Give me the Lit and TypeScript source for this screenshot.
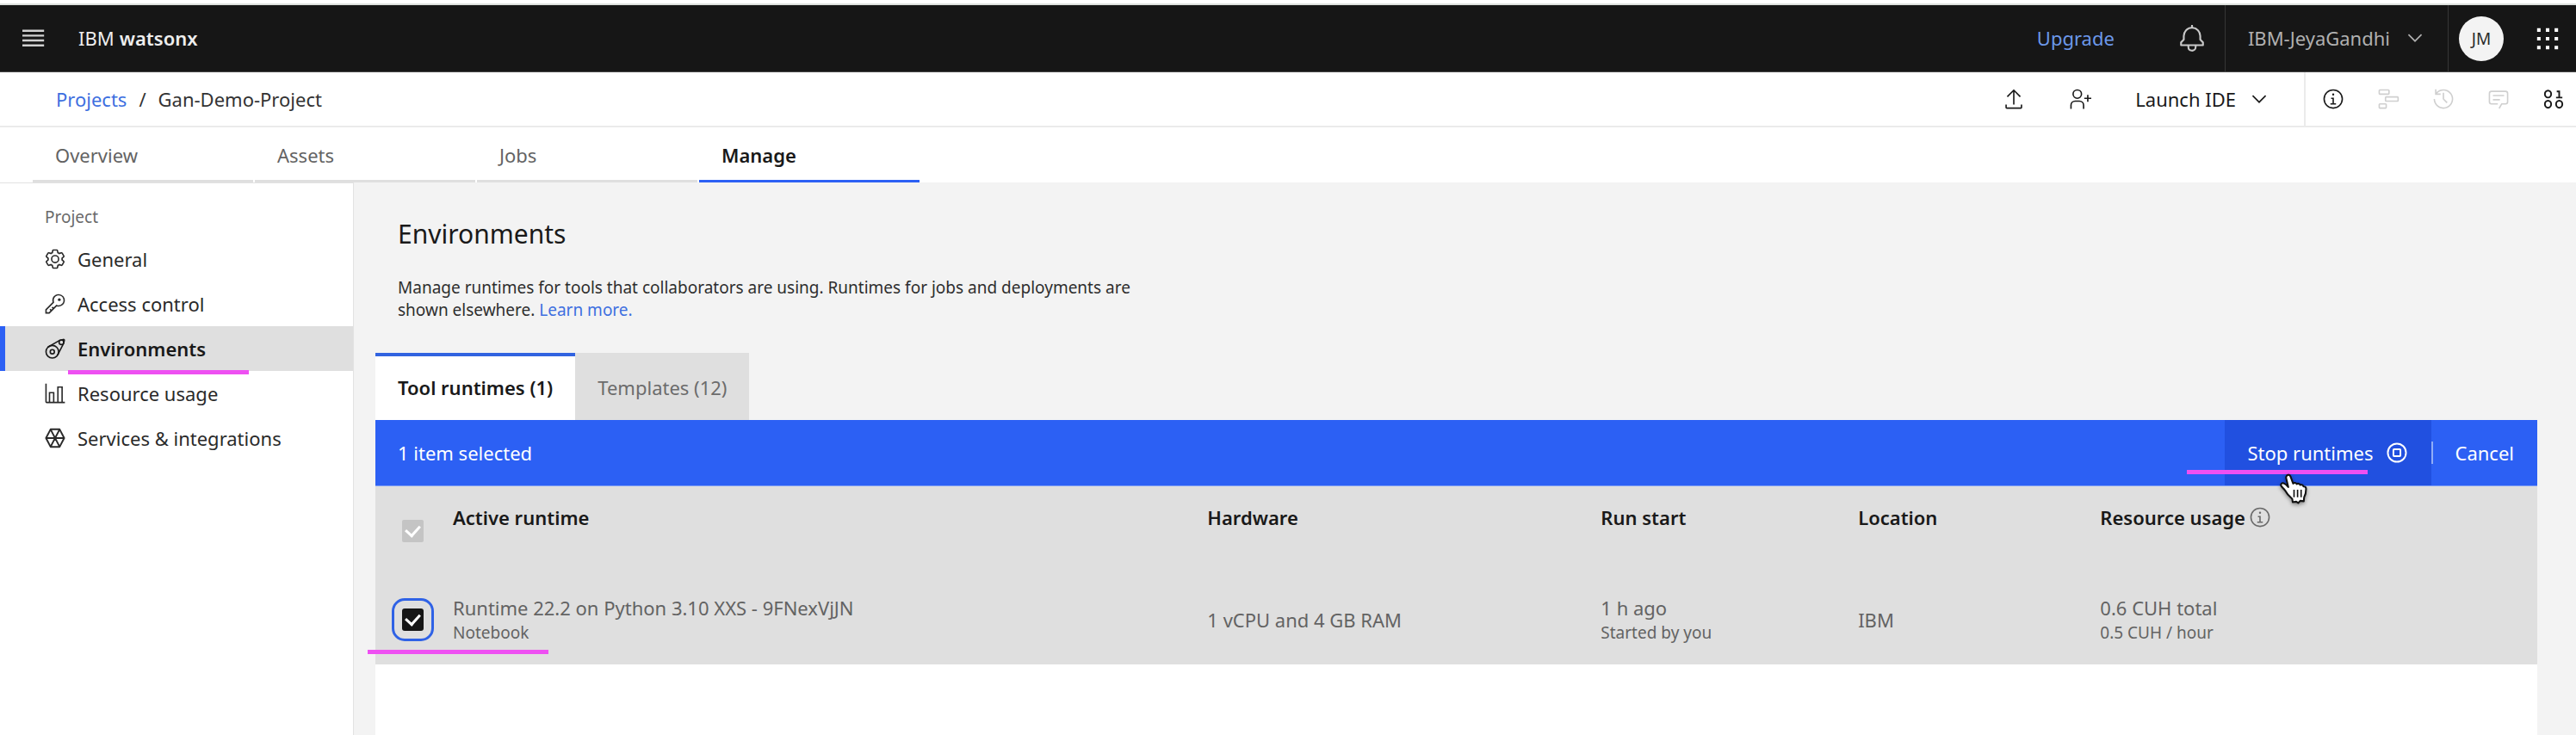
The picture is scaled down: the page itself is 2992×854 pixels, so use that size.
import { LitElement, html, svg, css, nothing } from "lit";
import { customElement, property } from "lit/decorators.js";

const ICONS: Record<string, unknown> = {
  menu: svg`<path d="M0 3h31v3H0zM0 10h31v3H0zM0 17h31v3H0zM0 24h31v3H0z"/>`,
  bell: svg`<path d="M28.7071,19.293,26,16.5859V13a10.0136,10.0136,0,0,0-9-9.9492V1H15V3.0508A10.0136,10.0136,0,0,0,6,13v3.5859L3.2929,19.293A1,1,0,0,0,3,20v3a1,1,0,0,0,1,1h7v.7768a5.152,5.152,0,0,0,4.5,5.1987A5.0057,5.0057,0,0,0,21,25V24h7a1,1,0,0,0,1-1V20A1,1,0,0,0,28.7071,19.293ZM19,25a3,3,0,0,1-6,0V24h6Zm8-3H5V20.4141L7.707,17.707A1,1,0,0,0,8,17V13a8,8,0,0,1,16,0v4a1,1,0,0,0,.293.707L27,20.4141Z"/>`,
  chevron: svg`<path d="M16 22 6 12 7.4 10.6 16 19.2 24.6 10.6 26 12z"/>`,
  apps: svg`<path d="M1 1h5v5H1zM13.5 1h5v5h-5zM26 1h5v5h-5zM1 13.5h5v5H1zM13.5 13.5h5v5h-5zM26 13.5h5v5h-5zM1 26h5v5H1zM13.5 26h5v5h-5zM26 26h5v5h-5z"/>`,
  export: svg`<path d="M26,24v4H6V24H4v4a2,2,0,0,0,2,2H26a2,2,0,0,0,2-2V24ZM6,12l1.41,1.41L15,5.83V24h2V5.83l7.59,7.58L26,12,16,2Z"/>`,
  invite: svg`<path d="M32,14H28V10H26v4H22v2h4v4h2V16h4ZM12,4a5,5,0,1,1-5,5,5,5,0,0,1,5-5m0-2a7,7,0,1,0,7,7A7,7,0,0,0,12,2ZM22,30H20V25a5,5,0,0,0-5-5H9a5,5,0,0,0-5,5v5H2V25a7,7,0,0,1,7-7h6a7,7,0,0,1,7,7Z"/>`,
  info: svg`<path d="M17,22V14H13v2h2v6H12v2h8V22ZM16,8a1.5,1.5,0,1,0,1.5,1.5A1.5,1.5,0,0,0,16,8Z"/><path d="M16,30A14,14,0,1,1,30,16,14,14,0,0,1,16,30ZM16,4A12,12,0,1,0,28,16,12,12,0,0,0,16,4Z"/>`,
  flow: svg`<g fill="none" stroke="currentColor" stroke-width="2"><rect x="3" y="3" width="14" height="6" rx="1"/><rect x="12" y="13" width="18" height="6" rx="1"/><rect x="3" y="23" width="10" height="6" rx="1"/></g>`,
  history: svg`<path d="M20.59,22,15,16.41V7h2v8.58l5,5.01L20.59,22Z"/><path d="M16,2A13.94,13.94,0,0,0,6,6.23V2H4v8h8V8H7.08A12,12,0,1,1,4,16H2A14,14,0,1,0,16,2Z"/>`,
  chat: svg`<path d="M17.74,30,16,29l4-7h6a2,2,0,0,0,2-2V8a2,2,0,0,0-2-2H6A2,2,0,0,0,4,8V20a2,2,0,0,0,2,2h9v2H6a4,4,0,0,1-4-4V8A4,4,0,0,1,6,4H26a4,4,0,0,1,4,4V20a4,4,0,0,1-4,4H21.16Z"/><path d="M8 10H24V12H8zM8 16H18V18H8z"/>`,
  data: svg`<g fill="none" stroke="currentColor" stroke-width="2.4"><ellipse cx="8" cy="9" rx="4.5" ry="5"/><ellipse cx="8" cy="23.5" rx="4.5" ry="5"/><ellipse cx="24" cy="23.5" rx="4.5" ry="5"/><path d="M20.5 5.2H24V14M19.5 14h9"/></g>`,
  settings: svg`<path d="M27,16.76c0-.25,0-.5,0-.76s0-.51,0-.77l1.92-1.68A2,2,0,0,0,29.3,11L26.94,7a2,2,0,0,0-1.73-1,2,2,0,0,0-.64.1l-2.43.82a11.35,11.35,0,0,0-1.31-.75l-.51-2.52a2,2,0,0,0-2-1.61H13.64a2,2,0,0,0-2,1.61l-.51,2.52a11.48,11.48,0,0,0-1.32.75L7.43,6.06A2,2,0,0,0,6.79,6,2,2,0,0,0,5.06,7L2.7,11a2,2,0,0,0,.41,2.51L5,15.24c0,.25,0,.5,0,.76s0,.51,0,.77L3.11,18.45A2,2,0,0,0,2.7,21L5.06,25a2,2,0,0,0,1.73,1,2,2,0,0,0,.64-.1l2.43-.82a11.35,11.35,0,0,0,1.31.75l.51,2.52a2,2,0,0,0,2,1.61h4.72a2,2,0,0,0,2-1.61l.51-2.52a11.48,11.48,0,0,0,1.32-.75l2.42.82a2,2,0,0,0,.64.1,2,2,0,0,0,1.73-1L29.3,21a2,2,0,0,0-.41-2.51ZM25.21,24l-3.43-1.16a8.86,8.86,0,0,1-2.71,1.57L18.36,28H13.64l-.71-3.55a9.36,9.36,0,0,1-2.7-1.57L6.79,24,4.43,20l2.72-2.4a8.9,8.9,0,0,1,0-3.13L4.43,12,6.79,8l3.43,1.16a8.86,8.86,0,0,1,2.71-1.57L13.64,4h4.72l.71,3.55a9.36,9.36,0,0,1,2.7,1.57L25.21,8,27.57,12l-2.72,2.4a8.9,8.9,0,0,1,0,3.13L27.57,20Z"/><path d="M16,22a6,6,0,1,1,6-6A5.94,5.94,0,0,1,16,22Zm0-10a3.91,3.91,0,0,0-4,4,3.91,3.91,0,0,0,4,4,3.91,3.91,0,0,0,4-4A3.91,3.91,0,0,0,16,12Z"/>`,
  key: svg`<path d="M21,2a8.9977,8.9977,0,0,0-8.6119,11.6118L2,24v6H8L18.3881,19.6118A9,9,0,1,0,21,2Zm0,16a7.0125,7.0125,0,0,1-2.0322-.3022L17.821,17.35l-.8472.8472-3.1811,3.1812L12.4141,20,11,21.4141l1.3787,1.3786-1.5859,1.586L9.4141,23,8,24.4141l1.3787,1.3786L7.1716,28H4V24.8284l9.8023-9.8023.8472-.8474-.3473-1.1467A7,7,0,1,1,21,18Z"/><circle cx="22" cy="10" r="2"/>`,
  environment: svg`<g fill="none" stroke="currentColor" stroke-width="2"><circle cx="12" cy="20.5" r="9"/><circle cx="12" cy="20.5" r="3"/><circle cx="25" cy="7" r="3.3"/><path d="M5.5 14.2 22.5 4.2 27.5 3Q29.5 2.7 29.2 4.5L28 9 19.5 25.5"/></g>`,
  chart: svg`<path d="M27,28V6H19V28H15V14H7V28H4V2H2V28a2,2,0,0,0,2,2H30V28ZM13,28H9V16h4Zm12,0H21V8h4Z"/>`,
  services: svg`<g fill="none" stroke="currentColor" stroke-width="2.4" stroke-linejoin="round"><path d="M3 16 9.5 3.5h13L29 16l-6.500 12.5h-13zM9.500 3.500l13 25M22.500 3.500l-13 25M3 16h26"/></g>`,
  stop: svg`<g fill="none" stroke="currentColor" stroke-width="2.4"><circle cx="16" cy="16" r="13"/><rect x="11" y="11" width="10" height="10" rx="1"/></g>`,
};

@customElement("ui-icon")
class UiIcon extends LitElement {
  @property() name = "";
  static styles = css`
    :host { display: inline-flex; flex: none; width: 26px; height: 26px; }
    svg { width: 100%; height: 100%; fill: currentColor; }
  `;
  render() {
    return html`<svg viewBox="0 0 32 32" aria-hidden="true">${ICONS[this.name]}</svg>`;
  }
}

const TABS = ["Overview", "Assets", "Jobs", "Manage"];
const NAV = [
  { icon: "settings", label: "General" },
  { icon: "key", label: "Access control" },
  { icon: "environment", label: "Environments" },
  { icon: "chart", label: "Resource usage" },
  { icon: "services", label: "Services & integrations" },
];
const TOOLS = [
  { icon: "info", label: "Information", off: false },
  { icon: "flow", label: "Lineage", off: true },
  { icon: "history", label: "History", off: true },
  { icon: "chat", label: "Comments", off: true },
  { icon: "data", label: "Data", off: false },
];
const RUNTIMES = [
  {
    name: "Runtime 22.2 on Python 3.10 XXS - 9FNexVjJN", kind: "Notebook",
    hardware: "1 vCPU and 4 GB RAM", start: "1 h ago", by: "Started by you",
    location: "IBM", total: "0.6 CUH total", rate: "0.5 CUH / hour",
  },
];

@customElement("app-root")
class AppRoot extends LitElement {
  static styles = css`
    :host {
      --blue: #2c60f4;
      --line: #e2e2e2;
      --layer: #dfdfdf;
      --muted: #636363;
      display: flex; flex-direction: column; min-height: 100vh;
      background: #fff; color: #191919;
      font: 400 22px/30px "Noto Sans", "Open Sans", sans-serif;
    }
    * { box-sizing: border-box; }
    button { border: 0; margin: 0; padding: 0; background: none; color: inherit; font: inherit; display: flex; align-items: center; justify-content: center; }
    a { color: inherit; text-decoration: none; }
    h1, p, ul { margin: 0; padding: 0; }

    .top { display: flex; margin-top: 4px; border-top: 2px solid #dde1dd; height: 80px; background: #161616; color: #e2e2e2; border-bottom: 1px solid #474747; }
    .menu { width: 77px; color: #d0d0d0; }
    .brand { display: flex; align-items: center; gap: 6px; padding: 0 0 2px 14px; color: #eee; }
    .brand strong { font-weight: 600; }
    .right { display: flex; align-items: stretch; margin-left: auto; }
    .upgrade { display: flex; align-items: center; color: #6c98ea; padding: 0 52px 2px 0; }
    .bell { width: 76px; color: #c8c8c8; }
    .bell ui-icon { width: 34px; height: 34px; }
    .account { gap: 16px; padding: 0 25px 2px 26px; color: #b0b0b0; border: solid #363636; border-width: 0 1px; }
    .user { padding: 0 18px 0 12px; }
    .avatar { display: flex; align-items: center; justify-content: center; width: 52px; height: 52px; border-radius: 50%; background: #f3f3f3; color: #2a2a2a; font-size: 19px; }
    .apps { width: 66px; color: #fff; }

    .crumbs { display: flex; align-items: stretch; height: 64px; border-bottom: 2px solid #ebebeb; }
    .path { display: flex; align-items: center; gap: 14px; padding-left: 65px; color: #333; }
    .path a, .about a { color: #3d6fe0; }
    .action { width: 77px; }
    .launch { gap: 14px; padding: 0 39px 0 26px; }
    .tools { display: flex; border-left: 2px solid #ebebeb; }
    .tool { width: 64px; }
    .tool:disabled { color: #cfcfcf; }
    .tool:last-child { width: 58px; padding-left: 6px; }

    .tabs { display: flex; gap: 2px; height: 64px; padding-left: 38px; }
    .tab { width: 256px; padding: 3px 0 0 26px; border-bottom: 3px solid #dfdfdf; color: var(--muted); justify-content: flex-start; }
    .tab.on { border-color: var(--blue); color: #191919; font-weight: 600; }

    .body { display: flex; flex: 1; background: #f3f3f3; }
    .side { width: 411px; flex: none; background: #fff; border: solid var(--line); border-width: 1px 1px 0 0; padding-top: 26px; }
    .group { padding-left: 52px; margin-bottom: 10px; font-size: 19px; line-height: 26px; color: #6a6a6a; }
    .side ul { list-style: none; }
    .item { position: relative; display: flex; align-items: center; gap: 13px; height: 52px; padding-left: 51px; color: #2a2a2a; }
    .item.on { background: var(--layer); box-shadow: inset 6px 0 var(--blue); font-weight: 600; color: #191919; }
    .mark { position: absolute; z-index: 1; width: 210px; height: 5px; background: #ee50f2; pointer-events: none; }
    .item .mark { left: 79px; top: 51px; }

    .main { flex: 1; min-width: 0; display: flex; flex-direction: column; padding: 40px 45px 0 25px; }
    h1 { padding-left: 26px; font-size: 30px; line-height: 40px; font-weight: 400; }
    .about { max-width: 906px; padding-left: 26px; margin: 29px 0 37px; font-size: 19px; line-height: 26px; color: #2e2e2e; }
    .sections { display: flex; }
    .section { height: 78px; padding: 0 26px 3px; border-top: 4px solid var(--layer); background: var(--layer); color: #6c6c6c; }
    .section.on { background: #fff; border-color: #3163e0; color: #191919; font-weight: 600; }
    .panel { flex: 1; background: #fff; }
    .batch { position: relative; display: flex; align-items: stretch; height: 77px; padding-left: 26px; background: var(--blue); color: #fff; border-bottom: 1px solid #7c9df5; }
    .count { display: flex; align-items: center; }
    .stop { gap: 14px; padding: 0 27px; background: #2150e0; }
    .sep { align-self: center; width: 2px; height: 26px; background: #90adf8; }
    .cancel { padding: 0 27px 0 26px; }
    .batch .mark { right: 197px; top: 58px; }
    .pointer { position: absolute; z-index: 2; right: 265px; top: 62px; width: 35px; height: 37px; filter: drop-shadow(0 2px 2px rgba(0, 0, 0, 0.4)); }

    table { width: 100%; table-layout: fixed; border-collapse: collapse; background: var(--layer); }
    .c-check { width: 90px; } .c-name { width: 34.9%; } .c-hard { width: 18.2%; } .c-start { width: 11.9%; } .c-loc { width: 11.2%; }
    th { height: 103px; padding: 21px 0 0; text-align: left; vertical-align: top; font-weight: 600; }
    td { height: 104px; padding: 0; vertical-align: middle; color: var(--muted); }
    th.pick, td.pick { padding: 0 0 0 31px; vertical-align: middle; position: relative; }
    .sub { display: block; font-size: 19px; line-height: 28px; }
    .usage { display: flex; align-items: center; gap: 4px; }
    .usage ui-icon { color: #6a6a6a; }
    input { appearance: none; display: grid; place-items: center; margin: 0; width: 25px; height: 26px; border-radius: 2px; background: #161616; }
    input::after { content: ""; width: 8px; height: 13px; margin-top: -4px; border: solid #fff; border-width: 0 3px 3px 0; transform: rotate(42deg); }
    input:disabled { background: #c4c4c4; }
    .pick .focused { outline: 3px solid #2f62e6; outline-offset: 9px; border-radius: 3px; }
    .pick .mark { left: -9px; bottom: 12px; }
  `;

  render() {
    return html`
      <header class="top">
        <button class="menu" aria-label="Menu"><ui-icon name="menu"></ui-icon></button>
        <a class="brand" href="#"><span>IBM</span><strong>watsonx</strong></a>
        <div class="right">
          <a class="upgrade" href="#">Upgrade</a>
          <button class="bell" aria-label="Notifications"><ui-icon name="bell"></ui-icon></button>
          <button class="account">IBM-JeyaGandhi<ui-icon name="chevron"></ui-icon></button>
          <button class="user" aria-label="Profile"><span class="avatar">JM</span></button>
          <button class="apps" aria-label="App switcher"><ui-icon name="apps"></ui-icon></button>
        </div>
      </header>
      <div class="crumbs">
        <nav class="path" aria-label="Breadcrumb"><a href="#">Projects</a><span>/</span><span>Gan-Demo-Project</span></nav>
        <div class="right">
          <button class="action" aria-label="Export"><ui-icon name="export"></ui-icon></button>
          <button class="action" aria-label="Add collaborators"><ui-icon name="invite"></ui-icon></button>
          <button class="launch">Launch IDE<ui-icon name="chevron"></ui-icon></button>
          <div class="tools">
            ${TOOLS.map((t) => html`<button class="tool" aria-label=${t.label} ?disabled=${t.off}><ui-icon name=${t.icon}></ui-icon></button>`)}
          </div>
        </div>
      </div>
      <div class="tabs" role="tablist">
        ${TABS.map((t) => html`<button role="tab" aria-selected=${t === "Manage"} class="tab ${t === "Manage" ? "on" : ""}">${t}</button>`)}
      </div>
      <div class="body">
        <nav class="side" aria-label="Project">
          <div class="group">Project</div>
          <ul>
            ${NAV.map((n) => {
              const on = n.label === "Environments";
              return html`<li><a href="#" class="item ${on ? "on" : ""}"><ui-icon name=${n.icon}></ui-icon>${n.label}${on ? html`<span class="mark"></span>` : nothing}</a></li>`;
            })}
          </ul>
        </nav>
        <main class="main">
          <h1>Environments</h1>
          <p class="about">Manage runtimes for tools that collaborators are using. Runtimes for jobs and deployments are shown elsewhere. <a href="#">Learn more.</a></p>
          <div class="sections" role="tablist">
            <button role="tab" aria-selected="true" class="section on">Tool runtimes (1)</button>
            <button role="tab" aria-selected="false" class="section">Templates (12)</button>
          </div>
          <div class="panel">
            <div class="batch">
              <span class="count">1 item selected</span>
              <div class="right">
                <button class="stop">Stop runtimes<ui-icon name="stop"></ui-icon></button>
                <span class="sep"></span>
                <button class="cancel">Cancel</button>
              </div>
              <span class="mark"></span>
              <svg class="pointer" viewBox="0 0 34 36" aria-hidden="true">
                <path d="M9 2.5C10 1 12.3 1.5 13 3.5l3 8c1-1.3 3.4-1 4 .6 1.2-1 3.3-.6 4 1 1.3-.7 3.2 0 3.7 1.7 1.5-.3 2.9.9 2.9 2.8 0 3.4-.5 6.4-2.2 9.4l-.4 4.5-4-.5-2.3 2.5-2.2-1.5-4 .5-.5-3.5C11.5 26 9 23.5 7 19.5 5.5 17.5 3.7 16 2.500 14.300c-1-1.800.6-3.800 2.700-3.200 1.800.5 3.800 2.400 5.300 4.400L8.200 5.800C7.800 4.500 8.200 3.300 9 2.500z" fill="#fff" stroke="#111" stroke-width="2" stroke-linejoin="round"/>
                <path d="M17 18.500v8.500M21 18.500v8.500M25 18.500v8.500" fill="none" stroke="#111" stroke-width="1.600"/>
              </svg>
            </div>
            <table>
              <colgroup><col class="c-check"><col class="c-name"><col class="c-hard"><col class="c-start"><col class="c-loc"><col></colgroup>
              <thead>
                <tr>
                  <th class="pick"><input type="checkbox" aria-label="Select all runtimes" checked disabled></th>
                  <th>Active runtime</th>
                  <th>Hardware</th>
                  <th>Run start</th>
                  <th>Location</th>
                  <th><span class="usage">Resource usage<ui-icon name="info"></ui-icon></span></th>
                </tr>
              </thead>
              <tbody>
                ${RUNTIMES.map((r) => html`<tr>
                  <td class="pick"><input class="focused" type="checkbox" aria-label="Select ${r.name}" checked><span class="mark"></span></td>
                  <td>${r.name}<span class="sub">${r.kind}</span></td>
                  <td>${r.hardware}</td>
                  <td>${r.start}<span class="sub">${r.by}</span></td>
                  <td>${r.location}</td>
                  <td>${r.total}<span class="sub">${r.rate}</span></td>
                </tr>`)}
              </tbody>
            </table>
          </div>
        </main>
      </div>
    `;
  }
}
